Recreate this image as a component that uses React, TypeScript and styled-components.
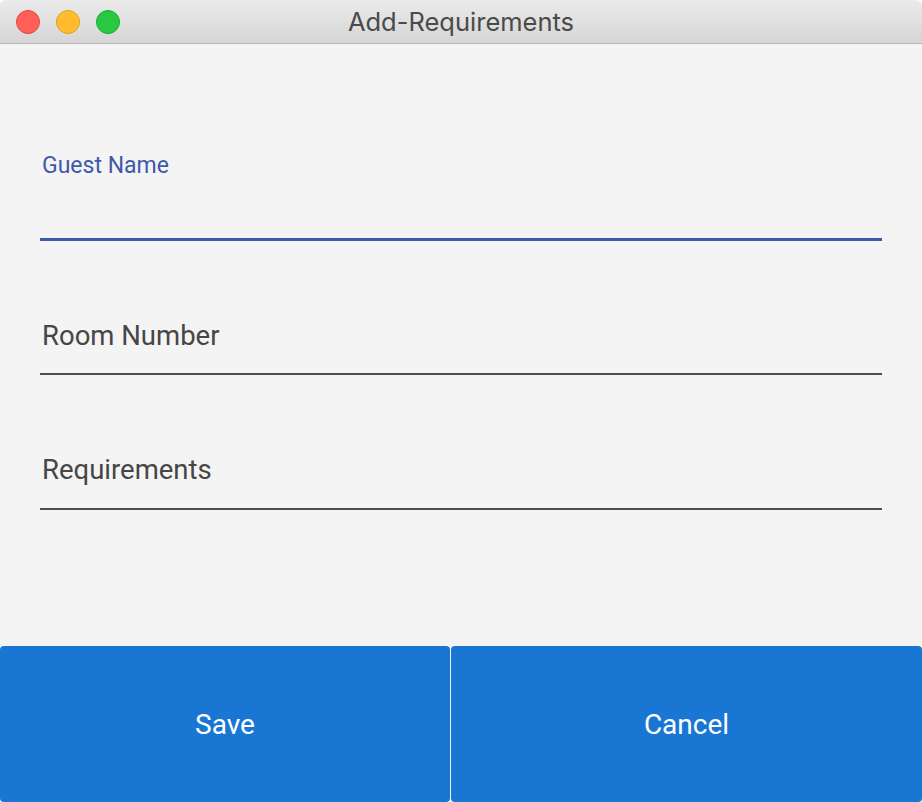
import React from 'react';
import styled, { createGlobalStyle } from 'styled-components';

const GlobalStyle = createGlobalStyle`
  html, body {
    margin: 0;
    padding: 0;
    background: #ffffff;
  }
  #root {
    height: 802px;
  }
`;

const Window = styled.div`
  width: 922px;
  height: 802px;
  display: flex;
  flex-direction: column;
  background: #f4f4f4;
  font-family: Roboto, 'Liberation Sans', sans-serif;
  border-radius: 6px 6px 0 0;
  overflow: hidden;
`;

const TitleBar = styled.div`
  height: 43px;
  flex-shrink: 0;
  display: flex;
  align-items: center;
  position: relative;
  background: linear-gradient(#ebebeb, #d5d5d5);
  border-bottom: 1px solid #b6b6b6;
`;

const Lights = styled.div`
  display: flex;
  gap: 16px;
  padding-left: 16px;
`;

const Light = styled.span<{ $fill: string; $edge: string }>`
  width: 24px;
  height: 24px;
  border-radius: 50%;
  box-sizing: border-box;
  background: ${({ $fill }) => $fill};
  border: 1px solid ${({ $edge }) => $edge};
`;

const Title = styled.div`
  position: absolute;
  left: 0;
  right: 0;
  text-align: center;
  font-family: Inter, 'Noto Sans', sans-serif;
  font-size: 25.5px;
  color: #4a4a4a;
  pointer-events: none;
`;

const Form = styled.div`
  flex: 1;
  padding: 0 40px;
  display: flex;
  flex-direction: column;
`;

const Field = styled.div<{ $top: number; $active?: boolean }>`
  margin-top: ${({ $top }) => $top}px;
  display: flex;
  flex-direction: column;
  border-bottom: ${({ $active }) => ($active ? '3px solid #4059a9' : '2px solid #4d4d4d')};
`;

const FloatLabel = styled.label`
  padding-left: 2px;
  font-size: 23px;
  line-height: 24px;
  color: #4059a9;
`;

const InputArea = styled.div<{ $h: number }>`
  height: ${({ $h }) => $h}px;
`;

const Placeholder = styled.label`
  padding-left: 2px;
  font-size: 27.5px;
  line-height: 30px;
  color: #464646;
`;

const Buttons = styled.div`
  height: 156px;
  flex-shrink: 0;
  display: grid;
  grid-template-columns: 450px 1fr;
  gap: 1px;
`;

const Button = styled.button`
  border: none;
  border-radius: 4px;
  background: #1976d2;
  color: #ffffff;
  font-family: Roboto, 'Liberation Sans', sans-serif;
  font-size: 28px;
  cursor: pointer;
`;

export default function App() {
  return (
    <>
      <GlobalStyle />
      <Window>
        <TitleBar>
          <Lights>
            <Light $fill="#fe5f57" $edge="#e2463f" />
            <Light $fill="#febc2e" $edge="#e1a116" />
            <Light $fill="#28c840" $edge="#14ae2c" />
          </Lights>
          <Title>Add-Requirements</Title>
        </TitleBar>
        <Form>
          <Field $top={110} $active>
            <FloatLabel>Guest Name</FloatLabel>
            <InputArea $h={60} />
          </Field>
          <Field $top={80}>
            <Placeholder>Room Number</Placeholder>
            <InputArea $h={22} />
          </Field>
          <Field $top={80}>
            <Placeholder>Requirements</Placeholder>
            <InputArea $h={23} />
          </Field>
        </Form>
        <Buttons>
          <Button>Save</Button>
          <Button>Cancel</Button>
        </Buttons>
      </Window>
    </>
  );
}
